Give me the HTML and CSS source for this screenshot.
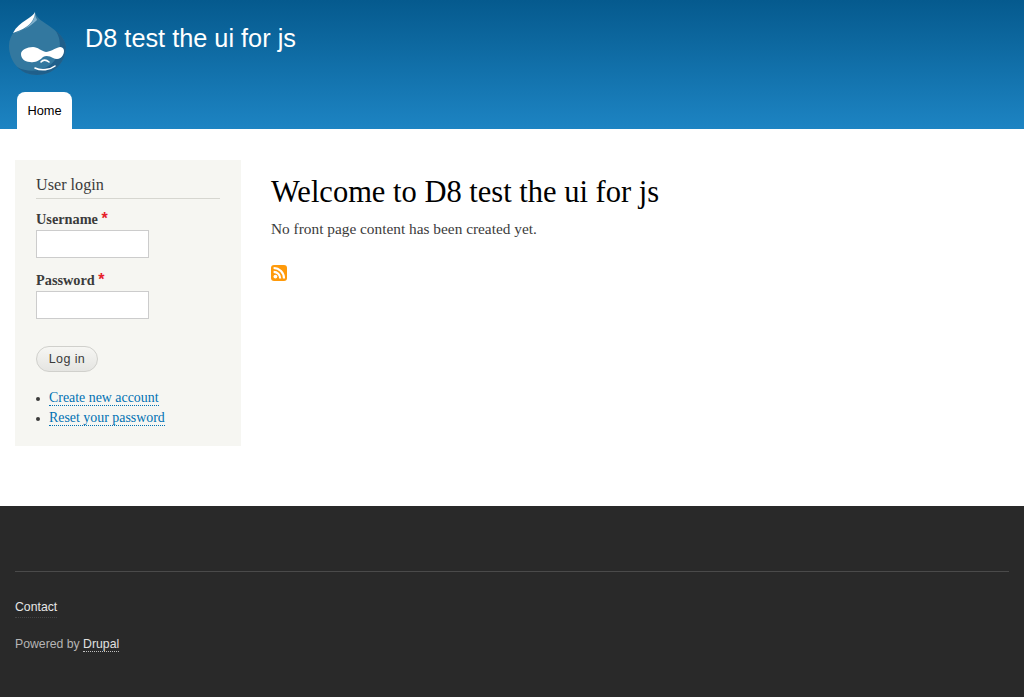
FILE: index.html
```html
<!DOCTYPE html>
<html lang="en">
<head>
<meta charset="utf-8">
<title>D8 test the ui for js</title>
<link rel="stylesheet" href="styles.css">
</head>
<body>
<header class="site-header">
  <div class="branding">
    <svg class="logo" width="60" height="68" viewBox="8 10 60 68" aria-label="Drupal logo">
      <path d="M35 11 C35 18 44 22 52 28 C60 34 66 41 66 47 C66 63 53 75 37 75 C21 75 9 62 9 46 C9 34 18 27 25 22 C30 19 34 16 35 11 Z" fill="#33789f"/>
      <path d="M55 30 C61 35 66 41 66 47 C66 63 53 75 37 75 C29 75 22 72 17 67 C26 72 38 72 47 67 C60 60 64 42 55 30 Z" fill="#1f5f8b"/>
      <path d="M35 13 C35 17 37 19 37 20 C32 25 26 29 15 33 C22 31 28 27 32 22 C34 19 35 16 35 13 Z" fill="#7fb0cc"/>
      <path d="M35 12 C35 18 31 24 26 27 C22 30 17 31 13 33 C16 27 21 23 26 20 C30 17 34 15 35 12 Z" fill="#fff"/>
      <path d="M33 47 C38 47 41 51 46 52 C50 52 55 48 60 47 C64 47 65 51 63 55 C61 59 57 60 53 58 C50 56 46 55 43 57 C40 60 36 63 30 62 C24 62 21 58 21 54 C21 50 27 47 33 47 Z" fill="#fff"/>
      <path d="M35 68 C41 71 50 70 55 66 M41 62 C43 59.5 46 59.5 49 62" fill="none" stroke="#fff" stroke-width="1.6" stroke-linecap="round"/>
    </svg>
    <div class="site-name">D8 test the ui for js</div>
  </div>
  <nav class="tabs"><a class="tab" href="#">Home</a></nav>
</header>

<main class="layout">
  <aside class="sidebar">
    <h2 class="block-title">User login</h2>
    <form class="login">
      <div class="field">
        <label class="field-label">Username <span class="req">*</span></label>
        <input class="text-input" type="text">
      </div>
      <div class="field">
        <label class="field-label">Password <span class="req">*</span></label>
        <input class="text-input" type="password">
      </div>
      <button class="btn" type="button">Log in</button>
    </form>
    <ul class="links">
      <li><a href="#">Create new account</a></li>
      <li><a href="#">Reset your password</a></li>
    </ul>
  </aside>
  <section class="content">
    <h1 class="page-title">Welcome to D8 test the ui for js</h1>
    <p class="empty">No front page content has been created yet.</p>
    <a class="feed" href="#" aria-label="RSS feed">
      <svg width="16" height="16" viewBox="0 0 16 16">
        <rect width="16" height="16" rx="3" fill="#ff9a0a"/>
        <circle cx="4.4" cy="11.6" r="1.9" fill="#fff"/>
        <path d="M2.6 6.8 A6.6 6.6 0 0 1 9.2 13.4 M2.6 3 A10.4 10.4 0 0 1 13 13.4" fill="none" stroke="#fff" stroke-width="2.2"/>
      </svg>
    </a>
  </section>
</main>

<footer class="site-footer">
  <div class="footer-inner">
    <a class="contact" href="#">Contact</a>
    <p class="powered">Powered by <a href="#">Drupal</a></p>
  </div>
</footer>
</body>
</html>
```
FILE: styles.css
```css
* { box-sizing: border-box; }
html, body { margin: 0; padding: 0; }
body {
  background: #fff;
  color: #3b3b3b;
  font-family: "Liberation Serif", "Times New Roman", serif;
  font-size: 15px;
  line-height: 20px;
  height: 697px;
  overflow: hidden;
  display: flex;
  flex-direction: column;
}
.site-header {
  height: 129px;
  background: linear-gradient(to bottom, #055a8e, #1d84c3);
  display: flex;
  flex-direction: column;
  justify-content: space-between;
  flex: none;
}
.branding { display: flex; align-items: flex-start; padding: 10px 0 0 8px; }
.logo { display: block; flex: none; }
.site-name {
  font-family: "Liberation Sans", Arial, sans-serif;
  font-size: 25.3px;
  line-height: 28px;
  color: #fff;
  margin: 14px 0 0 17px;
}
.tabs { display: flex; padding-left: 17px; }
.tab {
  display: block;
  width: 55px;
  height: 37px;
  background: #fff;
  border-radius: 8px 8px 0 0;
  color: #000;
  text-decoration: none;
  font-family: "Liberation Sans", Arial, sans-serif;
  font-size: 12.8px;
  line-height: 37px;
  text-align: center;
}
.layout {
  flex: 1;
  display: flex;
  align-items: flex-start;
  padding: 31px 15px 0;
}
.sidebar {
  width: 226px;
  height: 286px;
  flex: none;
  background: #f6f6f2;
  padding: 15px 21px 0;
}
.block-title {
  margin: 0 0 11px;
  font-size: 16.2px;
  font-weight: 400;
  line-height: 20px;
  height: 24px;
  color: #3b3b3b;
  border-bottom: 1px solid #d6d6d0;
}
.field { margin-bottom: 13px; }
.field-label {
  display: block;
  font-weight: 700;
  font-size: 14.3px;
  line-height: 18px;
  height: 20px;
}
.req { color: #e6202a; font-family: "Liberation Sans", sans-serif; font-size: 16px; }
.text-input {
  display: block;
  width: 113px;
  height: 28px;
  border: 1px solid #ccc;
  background: #fff;
  padding: 0;
}
.btn {
  display: block;
  margin-top: 27px;
  width: 62px;
  height: 26px;
  padding: 0;
  border: 1px solid #d0d0cc;
  border-radius: 13px;
  background: linear-gradient(to bottom, #f6f6f3, #e5e5e2);
  color: #3a3a3a;
  font-family: "Liberation Sans", Arial, sans-serif;
  font-size: 12.5px;
  letter-spacing: .4px;
}
.links { list-style: none; margin: 16px 0 0; padding: 0; font-size: 13.9px; }
.links li { position: relative; padding-left: 13px; }
.links li::before {
  content: "";
  position: absolute;
  left: 0;
  top: 9px;
  width: 4px;
  height: 4px;
  border-radius: 50%;
  background: #3b3b3b;
}
.links a { color: #0071b3; text-decoration: none; border-bottom: 1px dotted #0071b3; }
.content { flex: 1; padding: 14px 0 0 30px; min-width: 0; }
.page-title {
  margin: 0;
  color: #000;
  font-size: 30.5px;
  font-weight: 400;
  line-height: 36px;
}
.empty { margin: 9px 0 0; font-size: 15.35px; line-height: 20px; }
.feed { display: block; width: 16px; height: 16px; margin-top: 26px; }
.feed svg { display: block; }
.site-footer {
  height: 191px;
  flex: none;
  background: #292929;
  padding: 65px 15px 0;
  font-family: "Liberation Sans", Arial, sans-serif;
  font-size: 12.25px;
}
.footer-inner { border-top: 1px solid #4a4a4a; padding-top: 25px; }
.contact {
  display: block;
  width: fit-content;
  color: #e6e6e6;
  text-decoration: none;
  line-height: 20px;
  border-bottom: 1px dotted #444;
  margin-bottom: -1px;
}
.powered { margin: 17px 0 0; color: #b5b5b5; line-height: 20px; }
.powered a { color: #e0e0e0; text-decoration: none; border-bottom: 1px dotted #c0c0c0; }
```
